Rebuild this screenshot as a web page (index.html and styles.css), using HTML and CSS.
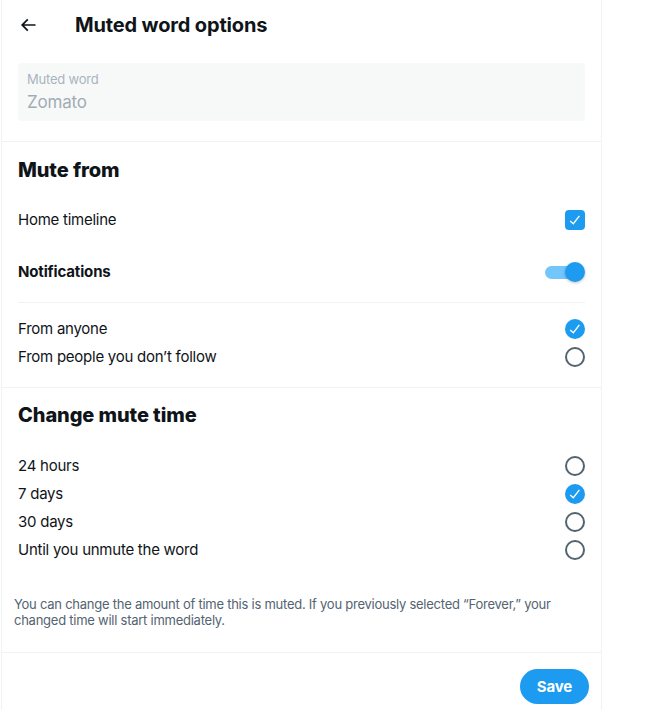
FILE: index.html
```html
<!DOCTYPE html>
<html lang="en">
<head>
<meta charset="utf-8">
<title>Muted word options</title>
<link rel="stylesheet" href="styles.css">
</head>
<body>
<div class="panel">
  <header class="header">
    <span class="back">
      <svg viewBox="0 0 24 24" width="20" height="20"><path d="M7.414 13l5.043 5.04-1.414 1.42L3.586 12l7.457-7.46 1.414 1.42L7.414 11H21v2H7.414z"/></svg>
    </span>
    <h1 class="title">Muted word options</h1>
  </header>

  <section class="section first">
    <div class="field">
      <div class="field-label">Muted word</div>
      <div class="field-value">Zomato</div>
    </div>
  </section>

  <section class="section mute-from">
    <h2 class="heading">Mute from</h2>
    <div class="row tall first-row">
      <span class="label">Home timeline</span>
      <span class="checkbox"><svg viewBox="0 0 24 24" width="16" height="16"><path d="M9.64 18.952l-5.55-4.861 1.317-1.504 3.951 3.459 8.459-10.948L19.4 6.32 9.64 18.952z"/></svg></span>
    </div>
    <div class="row tall">
      <span class="label bold">Notifications</span>
      <span class="toggle"><span class="track"></span><span class="knob"></span></span>
    </div>
    <div class="rule"></div>
    <div class="options first-options">
      <div class="row">
        <span class="label">From anyone</span>
        <span class="radio checked"><svg viewBox="0 0 24 24" width="16" height="16"><path d="M9.64 18.952l-5.55-4.861 1.317-1.504 3.951 3.459 8.459-10.948L19.4 6.32 9.64 18.952z"/></svg></span>
      </div>
      <div class="row">
        <span class="label">From people you don’t follow</span>
        <span class="radio"></span>
      </div>
    </div>
  </section>

  <section class="section mute-time">
    <h2 class="heading">Change mute time</h2>
    <div class="options time-options">
      <div class="row">
        <span class="label">24 hours</span>
        <span class="radio"></span>
      </div>
      <div class="row">
        <span class="label">7 days</span>
        <span class="radio checked"><svg viewBox="0 0 24 24" width="16" height="16"><path d="M9.64 18.952l-5.55-4.861 1.317-1.504 3.951 3.459 8.459-10.948L19.4 6.32 9.64 18.952z"/></svg></span>
      </div>
      <div class="row">
        <span class="label">30 days</span>
        <span class="radio"></span>
      </div>
      <div class="row">
        <span class="label">Until you unmute the word</span>
        <span class="radio"></span>
      </div>
    </div>
    <p class="note">You can change the amount of time this is muted. If you previously selected “Forever,” your changed time will start immediately.</p>
  </section>

  <footer class="footer">
    <button class="save">Save</button>
  </footer>
</div>
</body>
</html>
```

FILE: styles.css
```css
* { box-sizing: border-box; }

body {
  margin: 0;
  background: #ffffff;
  font-family: Inter, "Noto Sans", "Liberation Sans", sans-serif;
  color: #0f1419;
}

.panel {
  margin-left: 1px;
  width: 601px;
  min-height: 710px;
  border-left: 1px solid #eff3f4;
  border-right: 1px solid #eff3f4;
}

.header {
  height: 50px;
  display: flex;
  align-items: center;
  padding: 0 16px;
}

.back {
  width: 20px;
  height: 20px;
  display: flex;
  fill: #0f1419;
}

.title {
  margin: 0 0 0 37px;
  font-size: 20px;
  font-weight: 700;
  line-height: 24px;
  letter-spacing: -0.15px;
}

.section {
  border-bottom: 1px solid #eff3f4;
}

.section.first {
  padding: 13px 16px 20px;
}

.field {
  background: #f7f9f9;
  border-radius: 4px;
  height: 58px;
  padding: 8px 9px 0;
}

.field-label {
  font-size: 13px;
  line-height: 16px;
  color: #a9b4bd;
  letter-spacing: -0.2px;
}

.field-value {
  margin-top: 3px;
  font-size: 17px;
  line-height: 24px;
  color: #a2abb3;
  letter-spacing: -0.2px;
}

.mute-from {
  padding: 16px 16px 16px;
}

.heading {
  margin: 0;
  font-size: 20px;
  font-weight: 800;
  line-height: 24px;
  letter-spacing: -0.1px;
}

.row {
  display: flex;
  align-items: center;
  justify-content: space-between;
  height: 28px;
}

.row.tall {
  height: 52px;
}

.first-row {
  margin-top: 12px;
}

.label {
  font-size: 15px;
  line-height: 20px;
  letter-spacing: -0.25px;
}

.label.bold {
  font-weight: 700;
  letter-spacing: -0.15px;
}

.checkbox {
  width: 20px;
  height: 20px;
  border-radius: 4px;
  background: #1d9bf0;
  display: flex;
  align-items: center;
  justify-content: center;
  fill: #ffffff;
}

.toggle {
  position: relative;
  width: 40px;
  height: 20px;
}

.track {
  position: absolute;
  left: 0;
  right: 2px;
  top: 4px;
  height: 13px;
  border-radius: 7px;
  background: #72c6fb;
}

.knob {
  position: absolute;
  right: 0;
  top: 0;
  width: 20px;
  height: 20px;
  border-radius: 50%;
  background: #1d9bf0;
  box-shadow: 0 1px 3px rgba(0, 0, 0, 0.25);
}

.rule {
  margin-top: 4px;
  height: 1px;
  background: #eff3f4;
}

.first-options {
  margin-top: 12px;
}

.radio {
  width: 20px;
  height: 20px;
  border-radius: 50%;
  border: 2px solid #536471;
  display: flex;
  align-items: center;
  justify-content: center;
}

.radio.checked {
  border: none;
  background: #1d9bf0;
  fill: #ffffff;
}

.mute-time {
  padding: 15px 16px 24px;
}

.time-options {
  margin-top: 25px;
}

.note {
  margin: 32px 0 0 -4px;
  font-size: 13px;
  line-height: 16px;
  color: #536471;
  letter-spacing: -0.25px;
  max-width: 560px;
}

.footer {
  display: flex;
  justify-content: flex-end;
  padding: 16px 12px 0;
}

.save {
  height: 35px;
  padding: 0 17px;
  border: none;
  border-radius: 18px;
  background: #1d9bf0;
  color: #ffffff;
  font-family: Inter, "Noto Sans", "Liberation Sans", sans-serif;
  font-size: 15px;
  font-weight: 700;
  letter-spacing: -0.2px;
}
```
